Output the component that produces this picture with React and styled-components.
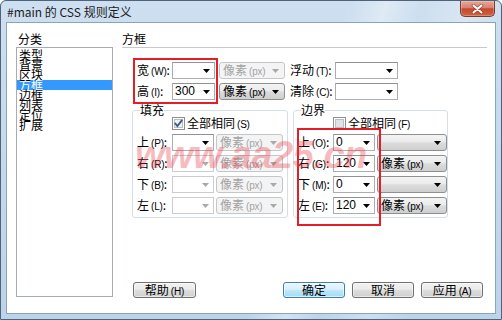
import React from 'react';
import styled, { createGlobalStyle } from 'styled-components';

const Global = createGlobalStyle`
  html, body { margin: 0; padding: 0; background: #fff; }
  body {
    font-family: "Noto Sans CJK SC", "Noto Sans", sans-serif;
    font-size: 12px;
    color: #000;
  }
  * { box-sizing: border-box; }
`;

const Window = styled.div`
  position: relative;
  width: 502px;
  height: 320px;
  border: 1px solid #4f6478;
  border-radius: 6px 6px 0 0;
  background:
    linear-gradient(108deg, rgba(255,255,255,0) 0%, rgba(255,255,255,0) 58%, rgba(255,255,255,.35) 64%, rgba(255,255,255,0) 70%, rgba(255,255,255,.25) 78%, rgba(255,255,255,0) 84%),
    linear-gradient(180deg, #cddff0 0%, #bdd3ea 100%);
  padding: 0 5px 5px;
  display: flex;
  flex-direction: column;
  overflow: hidden;
`;

const TitleBar = styled.div`
  height: 21px;
  display: flex;
  justify-content: space-between;
  align-items: flex-start;
`;

const Title = styled.div`
  padding-left: 1px;
  line-height: 21px;
  font-size: 12px;
  color: #1b1b1b;
`;

const CloseButton = styled.div`
  width: 35px;
  height: 16px;
  margin-right: 1px;
  border: 1px solid #7a3a2e;
  border-top: none;
  border-radius: 0 0 5px 5px;
  background: linear-gradient(180deg, #e6a796 0%, #d58370 45%, #c4482f 52%, #d2643f 100%);
  display: flex;
  align-items: center;
  justify-content: center;
  box-shadow: inset 0 0 0 1px rgba(255,255,255,.25);
`;

const Client = styled.div`
  flex: 1;
  background: #fff;
  border: 1px solid #8da3ba;
  display: flex;
  gap: 9px;
  padding: 8px 0 15px 9px;
`;

const Sidebar = styled.div`
  width: 97px;
  display: flex;
  flex-direction: column;
`;

const SectionLabel = styled.div`
  line-height: 16px;
  padding-left: ${p => p.$indent || 0}px;
`;

const CategoryList = styled.div`
  flex: 1;
  margin-bottom: 1px;
  border: 1px solid #a5acb5;
  padding-top: 2px;
`;

const CategoryItem = styled.div`
  height: 10px;
  line-height: 10px;
  padding-left: 2px;
  white-space: nowrap;
  background: ${p => (p.$selected ? '#3399ff' : 'transparent')};
  color: ${p => (p.$selected ? '#fff' : '#000')};
`;

const Main = styled.div`
  flex: 1;
  display: flex;
  flex-direction: column;
  padding-right: 8px;
`;

const PanelHeader = styled.div`
  line-height: 16px;
  border-bottom: 1px solid #c8c8c8;
`;

const TopBlock = styled.div`
  margin-top: 14px;
  padding-left: 15px;
  display: flex;
  flex-direction: column;
  gap: 4px;
`;

const FormRow = styled.div`
  height: 17px;
  display: flex;
  align-items: center;
`;

const FieldLabel = styled.span`
  width: ${p => p.$w}px;
  margin-left: ${p => p.$ml || 0}px;
  flex: none;
  white-space: nowrap;
  line-height: 17px;
`;

const Key = styled.span`
  font-family: "Liberation Sans", sans-serif;
  font-size: 10px;
  margin-left: 2px;
  letter-spacing: -0.2px;
`;

const Gap = styled.span`
  width: ${p => p.$w}px;
  flex: none;
`;

const ComboBox = styled.div`
  width: ${p => p.$w}px;
  height: 17px;
  flex: none;
  border: 1px solid ${p => (p.$disabled ? '#c9ccd1' : '#abadb3')};
  border-top-color: ${p => (p.$disabled ? '#c9ccd1' : '#8f9196')};
  background: #fff;
  display: flex;
  align-items: center;
  padding: 0 4px 0 2px;
  line-height: 15px;
  font-family: "Liberation Sans", "Noto Sans CJK SC", sans-serif;
  font-size: 12px;
`;

const ListBox = styled.div`
  width: ${p => p.$w}px;
  height: 17px;
  flex: none;
  border: 1px solid ${p => (p.$disabled ? '#c3c6ca' : '#8e8f8f')};
  border-radius: 3px;
  background: ${p =>
    p.$disabled
      ? '#f4f4f4'
      : 'linear-gradient(180deg, #f4f4f4 0%, #ebebeb 45%, #dcdcdc 52%, #cfcfcf 100%)'};
  color: ${p => (p.$disabled ? '#a3a3a3' : '#000')};
  display: flex;
  align-items: center;
  padding: 0 5px 0 3px;
  line-height: 15px;
  white-space: nowrap;
`;

const ValueText = styled.span`
  flex: 1;
  overflow: hidden;
  white-space: nowrap;
`;

const FieldsetRow = styled.div`
  margin-top: 3px;
  padding-left: 10px;
  display: flex;
  gap: 5px;
`;

const GroupBox = styled.fieldset`
  width: ${p => p.$w}px;
  margin: 0;
  padding: 0 ${p => p.$pr}px 3px 4px;
  border: 1px solid #d5dfe5;
  border-radius: 3px;
  display: flex;
  flex-direction: column;
  gap: 4px;
`;

const GroupLegend = styled.legend`
  padding: 0;
  margin-left: 3px;
  line-height: 14px;
  font-size: 12px;
`;

const CheckRow = styled.div`
  height: 13px;
  display: flex;
  align-items: center;
  gap: 2px;
  padding-left: ${p => p.$indent}px;
  line-height: 13px;
`;

const Footer = styled.div`
  margin-top: auto;
  display: flex;
  padding: 0 4px 0 11px;
`;

const ButtonGroup = styled.div`
  margin-left: auto;
  display: flex;
  gap: 7px;
`;

const Button = styled.button`
  width: ${p => p.$w || 62}px;
  height: 16px;
  padding: 0;
  border: 1px solid ${p => (p.$default ? '#3c7fb1' : '#707070')};
  border-radius: 3px;
  background: ${p =>
    p.$default
      ? 'linear-gradient(180deg, #eaf6fd 0%, #d9f0fc 45%, #bee6fd 52%, #a7d9f5 100%)'
      : 'linear-gradient(180deg, #f2f2f2 0%, #ebebeb 45%, #dddddd 52%, #cfcfcf 100%)'};
  box-shadow: inset 0 0 0 1px ${p => (p.$default ? 'rgba(255,255,255,.6)' : 'rgba(255,255,255,.5)')};
  font-family: "Noto Sans CJK SC", sans-serif;
  font-size: 12px;
  line-height: 14px;
  color: #000;
`;

const Highlight = styled.div`
  position: absolute;
  left: ${p => p.$x}px;
  top: ${p => p.$y}px;
  width: ${p => p.$w}px;
  height: ${p => p.$h}px;
  border: 2px solid #e41e26;
  pointer-events: none;
`;

const Watermark = styled.div`
  position: absolute;
  left: 134px;
  top: 135px;
  font-family: "Liberation Sans", sans-serif;
  font-weight: bold;
  font-style: italic;
  font-size: 38px;
  line-height: 38px;
  letter-spacing: -0.5px;
  color: rgba(232, 60, 70, 0.34);
  pointer-events: none;
  white-space: nowrap;
`;

const Caret = ({ color = '#000' }) => (
  <svg width="7" height="4" viewBox="0 0 7 4" style={{ flex: 'none' }}>
    <polygon points="0,0 7,0 3.5,4" fill={color} />
  </svg>
);

const CloseGlyph = () => (
  <svg width="13" height="10" viewBox="0 0 13 10">
    <path d="M2.5 1.5 L10.5 8.5 M10.5 1.5 L2.5 8.5" stroke="#6b2418" strokeWidth="3.6" strokeLinecap="round" opacity="0.55" />
    <path d="M2.5 1.5 L10.5 8.5 M10.5 1.5 L2.5 8.5" stroke="#fff" strokeWidth="2" strokeLinecap="round" />
  </svg>
);

const CheckBox = ({ checked }) => (
  <svg width="13" height="13" viewBox="0 0 13 13" style={{ flex: 'none' }}>
    <rect x="0.5" y="0.5" width="12" height="12" fill="#fff" stroke="#8f8f8f" />
    <rect x="2.5" y="2.5" width="8" height="8" fill={checked ? '#f0f2f4' : '#dfe2e6'} stroke="#b9bec4" />
    {checked && (
      <path d="M3.2 6.4 L5.4 9 L9.8 3.4" stroke="#3a5a8c" strokeWidth="1.8" fill="none" strokeLinecap="round" />
    )}
  </svg>
);

const Label = ({ text, k, w, ml }) => (
  <FieldLabel $w={w} $ml={ml}>
    {text}
    <Key>({k})</Key>:
  </FieldLabel>
);

const Combo = ({ w, value = '', disabled }) => (
  <ComboBox $w={w} $disabled={disabled}>
    <ValueText>{value}</ValueText>
    <Caret color={disabled ? '#a9a9a9' : '#000'} />
  </ComboBox>
);

const Select = ({ w, unit = false, disabled }) => (
  <ListBox $w={w} $disabled={disabled}>
    <ValueText>
      {unit && (
        <>
          像素<Key>(px)</Key>
        </>
      )}
    </ValueText>
    <Caret color={disabled ? '#a9a9a9' : '#000'} />
  </ListBox>
);

const categories = ['类型', '背景', '区块', '方框', '边框', '列表', '定位', '扩展'];

const paddingRows = [
  { text: '上', k: 'P', disabled: false },
  { text: '右', k: 'R', disabled: true },
  { text: '下', k: 'B', disabled: true },
  { text: '左', k: 'L', disabled: true },
];

const marginRows = [
  { text: '上', k: 'O', value: '0', unit: false },
  { text: '右', k: 'G', value: '120', unit: true },
  { text: '下', k: 'M', value: '0', unit: false },
  { text: '左', k: 'E', value: '120', unit: true },
];

export default function App() {
  return (
    <>
      <Global />
      <Window>
        <TitleBar>
          <Title>#main 的 CSS 规则定义</Title>
          <CloseButton>
            <CloseGlyph />
          </CloseButton>
        </TitleBar>
        <Client>
          <Sidebar>
            <SectionLabel $indent={2}>分类</SectionLabel>
            <CategoryList>
              {categories.map(c => (
                <CategoryItem key={c} $selected={c === '方框'}>
                  {c}
                </CategoryItem>
              ))}
            </CategoryList>
          </Sidebar>
          <Main>
            <PanelHeader>方框</PanelHeader>
            <TopBlock>
              <FormRow>
                <Label text="宽" k="W" w={35} />
                <Combo w={43} />
                <Gap $w={4} />
                <Select w={66} unit disabled />
                <Label text="浮动" k="T" w={45} ml={5} />
                <Combo w={63} />
              </FormRow>
              <FormRow>
                <Label text="高" k="I" w={35} />
                <Combo w={43} value="300" />
                <Gap $w={4} />
                <Select w={66} unit />
                <Label text="清除" k="C" w={45} ml={5} />
                <Combo w={63} />
              </FormRow>
            </TopBlock>
            <FieldsetRow>
              <GroupBox $w={156} $pr={4}>
                <GroupLegend>填充</GroupLegend>
                <CheckRow $indent={35}>
                  <CheckBox checked />
                  <span>全部相同<Key>(S)</Key></span>
                </CheckRow>
                {paddingRows.map(r => (
                  <FormRow key={r.k}>
                    <Label text={r.text} k={r.k} w={35} />
                    <Combo w={42} disabled={r.disabled} />
                    <Gap $w={2} />
                    <Select w={67} unit disabled />
                  </FormRow>
                ))}
              </GroupBox>
              <GroupBox $w={155} $pr={0}>
                <GroupLegend>边界</GroupLegend>
                <CheckRow $indent={35}>
                  <CheckBox />
                  <span>全部相同<Key>(F)</Key></span>
                </CheckRow>
                {marginRows.map(r => (
                  <FormRow key={r.k}>
                    <Label text={r.text} k={r.k} w={35} />
                    <Combo w={42} value={r.value} />
                    <Gap $w={2} />
                    <Select w={70} unit={r.unit} />
                  </FormRow>
                ))}
              </GroupBox>
            </FieldsetRow>
            <Footer>
              <Button $w={63}>帮助<Key>(H)</Key></Button>
              <ButtonGroup>
                <Button $default>确定</Button>
                <Button>取消</Button>
                <Button>应用<Key>(A)</Key></Button>
              </ButtonGroup>
            </Footer>
          </Main>
        </Client>
        <Highlight $x={132} $y={57} $w={85} $h={46} />
        <Highlight $x={296} $y={127} $w={84} $h={98} />
        <Watermark>www.aa25.cn</Watermark>
      </Window>
    </>
  );
}
